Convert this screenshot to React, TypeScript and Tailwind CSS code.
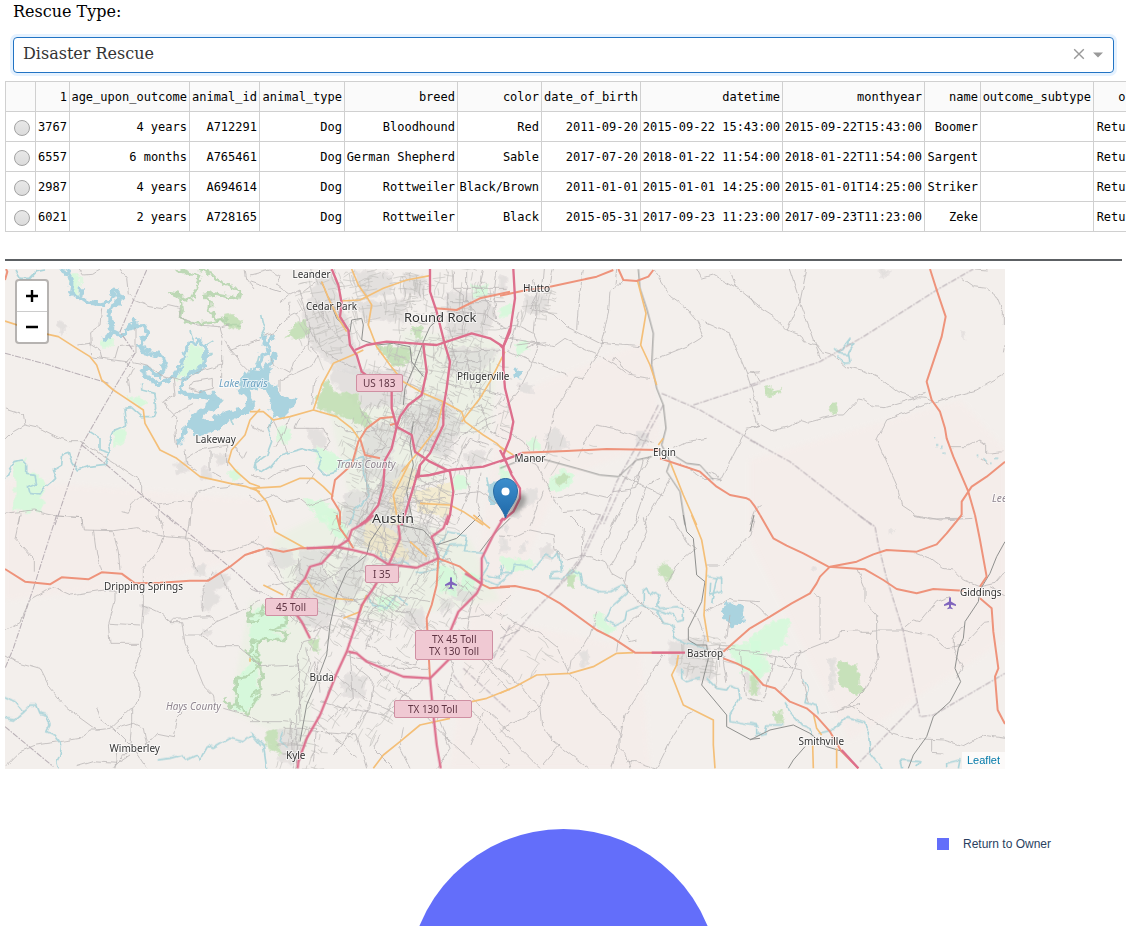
import React from "react";

type Kind =
  | "park" | "wood" | "sand" | "urban" | "water" | "wide" | "river" | "greenline"
  | "minor" | "rail" | "boundary" | "primary" | "trunk" | "motorway";

type Sheet = { x: number; y: number; layers: Partial<Record<Kind, string[]>> };

// Every sheet is drawn at three units per map pixel.
const sheets: Sheet[] = [
  {
    x: 0, y: 265,
    layers: {
      park: [
        "M205 32L225 25L242 45L235 90L215 82Z",
        "M525 343L555 285L575 245L595 238L612 265L608 300L560 330Z",
        "M45 590L75 585L80 620L105 625L132 640L125 740L45 738Z",
        "M345 495L378 490L375 530L340 545Z",
        "M300 230L335 220L340 235L315 250Z",
        "M380 395L420 397L440 418L415 420Z",
        "M680 625L715 615L725 640L700 645Z",
      ],
      urban: ["M170 170L185 165L200 190L185 210Z", "M525 595L560 590L560 620L530 625Z", "M605 610L630 610L635 640L605 645Z", "M640 570L680 568L680 595L650 595Z"],
      wood: ["M675 155L695 150L725 165L720 190L700 192L670 180Z"],
      greenline: [
        "M530 15L600 35L575 105L535 95L510 85L540 90L545 130L540 155L560 170L600 175L660 165L690 180L725 180",
        "M600 15L640 30L660 50L700 70L720 75L715 100L680 92L640 85L610 90L635 115L630 140L650 165L680 160",
      ],
      water: [
        "M575 450L615 425L640 405L600 398L560 395L540 385L600 385L645 385L662 405L655 430L610 445L605 465L630 470L665 445L700 435L735 430L738 400L715 375L720 350L735 325L785 320L785 365L745 370L758 400L758 430L720 455L680 470L650 498L590 512L575 490L555 500Z",
      ],
      wide: [
        "M180 12L205 22L215 50L210 80L235 95L260 112L300 118L325 112L338 90L345 72L358 90L355 115L332 128L328 150L335 180L350 208L375 206L395 182L430 180L442 195L430 222L418 245L430 262L465 270L490 275L497 300L480 330L465 330L445 308L428 315L440 335L470 355L510 345L535 315L550 280L565 240L595 225L620 252L612 300L560 335L540 365L545 385",
        "M325 165L338 200L325 218L310 225M750 330L770 300L780 285M555 485L550 515L535 535",
        "M340 75L330 95M355 95L372 105M245 95L245 70M395 182L405 160M430 250L455 255",
      ],
      river: [
        "M15 640L30 615L45 590L65 585L80 600L80 625L105 628L110 655L85 665L90 685L120 690L130 675L155 655L170 640L160 615L185 600L188 568L205 562L215 590L232 615L260 605L315 598L330 560L325 540L345 495L380 480L375 430L395 428L425 455L460 455L470 430L465 385L425 375L425 355",
        "M45 15L60 40L90 40L110 20L135 15M270 500L300 520L300 555L330 565M780 570L765 590L770 620M770 300L778 270",
        "M580 225L570 195M615 240L640 225M618 270L635 265M480 300L500 305M600 465L570 460M690 455L700 480M655 400L670 410",
      ],
      minor: [
        "M238 12L250 30L275 28L300 12M360 12L380 40L385 85L400 105L450 125L480 130L505 122L540 130L540 155L590 180L660 185L670 220L690 255L780 225",
        "M305 130L300 180L272 200L275 275L305 280L380 290L405 265L405 185M272 235L232 240M345 280L355 245L400 240M305 280L300 255L270 235",
        "M380 290L400 310L385 340L390 380M400 290L440 300L480 330L545 345M550 345L585 325L665 300L665 230",
        "M15 432L70 450L75 480L40 500L15 525M75 480L120 490L170 515L205 530L245 530L320 580L425 650L425 690L395 720L385 745L365 740",
        "M15 745L100 735L170 750L245 755L248 780M60 745L55 780M425 690L475 720L530 710L575 710L570 780M575 710L590 680L620 670L680 665L730 655",
        "M530 545L525 500L530 460L510 440L490 410L525 390L520 340M555 550L560 600L590 620M630 555L630 620L665 640M560 580L600 555L680 540L680 600",
        "M565 370L580 350L640 340L640 370L600 380L565 370M515 460L550 430L580 415M690 255L720 290L750 320M700 540L730 580L740 560",
        "M735 12L740 40L765 75M665 185L690 180M665 300L665 345M475 720L480 780",
      ],
      boundary: ["M440 15L405 95L360 200L405 265L340 375L245 540L165 780M15 265L130 295L325 355M245 540L320 600L425 690L530 780"],
      primary: ["M15 168L130 205L175 215L230 250L270 275L290 300L305 345L340 375L370 395L430 435L435 475L480 555L530 580L600 635L690 655L740 665L780 680M780 432L750 465L735 510L695 555L685 590L710 620L750 655L780 665"],
      trunk: ["M15 45L22 20L18 12"],
    },
  },
  {
    x: 250, y: 265,
    layers: {
      park: ["M195 545L250 565L290 600L255 625L215 620L205 590Z", "M665 60L715 60L715 95L675 95Z", "M160 700L220 710L260 740L270 780L210 770Z", "M610 635L650 635L650 670L610 680Z", "M80 495L110 485L125 515L110 535L80 525Z"],
      wood: ["M200 405L230 345L255 380L320 385L325 420L370 470L345 485L300 465L240 440L205 435Z", "M105 215L140 175L165 165L180 200L155 222Z", "M380 245L480 245L480 290L430 305Z", "M485 190L515 180L515 220L490 215Z"],
      urban: [
        "M165 140L200 40L245 30L270 110L310 220L330 330L260 310L190 250L160 190Z",
        "M460 30L525 35L520 90L465 85Z", "M310 20L420 30L430 85L340 100Z", "M320 110L470 105L465 170L345 160Z",
        "M590 80L700 90L740 150L700 210L590 220Z", "M245 310L470 320L470 420L330 425L245 350Z",
        "M350 480L440 480L430 560L400 640L340 640L335 540Z", "M450 500L560 450L580 560L500 560Z",
        "M290 680L390 670L360 780L270 780Z", "M170 490L220 495L235 550L190 545Z", "M440 440L570 390L640 470L590 580L500 550Z", "M590 250L750 250L700 310L600 330Z",
        "M400 600L480 600L470 780L370 780Z", "M645 565L700 555L705 595L665 600L640 580Z",
      ],
      sand: ["M425 650L480 600L500 640L460 700L450 780L420 780Z", "M490 680L610 650L600 760L500 740Z"],
      water: ["M0 315L30 320L60 320L55 350L80 370L85 390L135 405L130 425L100 455L75 458L60 435L65 405L50 380L15 365L0 368Z", "M0 395L12 410L0 440Z", "M715 680L735 650L740 700L725 720Z"],
      wide: ["M40 325L28 300L35 270L58 262L50 235L72 215M45 325L65 290L75 265M40 215L45 240M0 410L8 430"],
      river: ["M65 460L55 490L65 530L50 570L15 595L12 610L35 620L60 605L90 570L160 550L200 560L215 580L205 610L225 630L260 620L275 590L340 575L345 640L360 690L340 710L310 740L300 780", "M35 150L45 190L30 220M725 700L710 640"],
      minor: [
        "M0 30L60 15L90 30L80 60L120 90L150 75L165 130L110 160L70 200L40 210M90 110L115 90M120 110L115 155",
        "M0 50L60 70L90 80M165 130L180 200L175 240L130 290L120 325L75 300L60 275M180 245L205 270L190 300L125 330L90 345L90 380",
        "M175 180L205 240L250 280L320 310M210 50L250 120L275 170L300 200M200 110L240 190L280 230M160 80L200 50",
        "M70 470L95 520L110 560M120 455L100 510L75 545M150 460L135 490L220 490L240 530L220 555M0 480L40 500L70 470",
        "M0 690L30 710L70 690L105 710L150 700L175 720L240 700M0 630L50 645L85 620L165 600L190 625L170 660",
        "M205 330L190 360L185 420M480 250L490 310L525 330M590 85L600 200L620 290L690 290M600 260L750 255M610 70L770 70M600 110L765 110M590 140L710 150L770 190",
        "M610 20L610 70L640 90L640 200M650 12L650 110L680 150M700 12L690 60L715 120L700 180M740 20L730 100L740 160",
        "M600 310L640 340L690 320L750 330M590 350L620 365L690 370L750 390M620 280L620 370M650 270L670 400M690 260L690 400L740 430M720 280L720 380",
        "M590 390L620 440L690 420L720 500L770 520M580 560L690 470L760 440M610 600L660 520L720 540M580 510L680 500L740 470",
        "M460 395L600 460M470 430L570 550M490 410L440 490M510 450L460 540M550 430L500 540M570 440L510 590M450 520L540 560M360 480L410 540L340 590M370 560L430 540",
        "M330 430L360 485M250 470L290 500L380 500M350 560L350 780M380 660L480 670L590 640M360 720L590 700M510 640L600 690L690 680L760 730M510 710L570 780M640 600L660 680L620 780M690 620L680 710L700 780",
        "M500 610L490 680L520 750M580 620L570 700L530 780M410 600L390 660L320 780",
      ],
      rail: ["M215 50L240 110L260 160L300 200M300 200L305 165L335 160L340 180L335 225L380 240L430 235L480 245L485 290L520 335M580 150L540 185L520 230L490 310L465 370L460 420M490 470L480 540L490 600L470 680L490 780"],
      primary: [
        "M305 12L325 60L350 95L365 120L355 180L380 245L420 300L460 350L520 385L580 410L635 440L645 470L700 510L740 535L765 560",
        "M270 108L330 105L400 70L470 45L540 32M250 295L320 265L340 255M250 295L215 360L190 435M0 440L40 440L70 465L120 455L190 435L260 455L305 490L330 525",
        "M765 260L720 350L690 400L635 470M580 410L560 490L510 555L455 620M0 670L90 665L150 640L190 640L220 665L250 695M15 670L50 710L80 780M215 50L240 110L265 160L290 200",
        "M480 590L430 690L440 750M510 715L600 720L640 740L700 780",
      ],
      trunk: ["M555 130L620 135L690 100L780 80M435 455L390 460L350 490L325 530L305 600L255 645L245 700L270 740L270 780M420 480L440 475M330 520L345 570L390 580"],
      motorway: [
        "M245 12L265 60L275 115L270 155L295 195L300 240L320 270L335 320L375 350L425 375L425 430L440 485L425 550L405 585L400 660L385 720L350 765L330 780",
        "M540 12L540 80L560 140L585 240L600 290L590 370L580 430L580 480L540 565L510 600L480 700L455 780",
        "M315 255L350 240L410 230L490 235L560 240L620 220L665 205L720 220L760 245M780 190L760 245L760 310",
        "M520 240L530 320L515 390L475 420L450 455L440 485L485 510L495 560L540 590L600 620L610 680L600 750L590 780M495 635L540 630L600 615L700 605L760 585M510 600L505 640",
      ],
    },
  },
  {
    x: 500, y: 265,
    layers: {
      park: ["M0 130L35 115L40 145L0 160Z", "M40 240L80 230L90 255L50 275Z", "M150 645L190 610L220 630L210 665L160 680L140 665Z", "M80 530L115 522L120 550L90 555Z", "M0 600L30 620L25 650L0 640Z"],
      wood: ["M165 640L200 625L200 650L170 660Z"],
      urban: ["M75 90L140 90L145 125L110 155L75 140Z", "M55 355L95 360L100 385L60 380Z", "M135 510L170 490L210 545L160 560L140 545Z", "M0 30L20 40L20 80L0 80Z", "M55 680L110 670L115 700L60 740Z", "M410 500L440 500L445 540L410 540Z", "M35 750L60 720L55 760Z"],
      sand: [],
      water: ["M42 318L60 315L62 335L47 338Z", "M0 650L15 645L0 710Z"],
      minor: [
        "M75 60L115 65L110 90L90 130L165 150L200 185L300 235L420 245M250 12L235 120L230 195M110 90L100 200L115 235L160 245L195 220L240 245L285 265L345 300L385 330L450 340",
        "M370 45L330 80L325 145L300 250L250 340L225 340L190 395L165 430L150 500L130 560M0 190L50 180L100 205M0 215L115 235L90 310L60 370L20 420",
        "M460 12L490 60L505 90L560 130L590 165L610 215L570 240L460 285M605 165L640 180L690 205L740 325L780 320M590 12L605 40L640 30L720 75L780 125M690 20L710 70",
        "M340 290L345 280L360 290L370 310L400 330M0 490L40 510L70 530L90 560M250 540L290 480L340 490L460 535M0 420L15 400M50 240L140 230M20 255L130 305L200 330M80 250L110 235",
        "M520 550L560 530L620 520M660 645L740 490L780 480M740 325L780 450M540 590L610 640L660 645L650 630L620 620",
        "M85 590L110 600L160 700L190 740L240 735L300 750M160 700L220 690L260 685L320 700L340 680L410 670L430 580M450 575L410 640L340 780M480 640L440 660L400 780M510 640L430 780M360 630L490 690M130 680L90 780",
        "M350 12L345 60M100 40L110 90M130 12L125 70M160 12L150 60M60 140L30 250",
      ],
      boundary: ["M485 385L600 435L780 540M580 420L780 355M475 420L440 490L400 560L350 650L300 780M490 420L450 495L420 560L370 650L310 780"],
      rail: ["M415 12L420 70L440 130L460 205L455 300L470 370L490 420L498 490L485 540L510 590L500 620L540 680L555 780M0 610L50 590L120 580L230 610L300 630L355 635L410 585L455 575M520 570L560 595L600 600L640 645"],
      primary: ["M412 45L438 145L422 240L450 300L470 360M475 540L490 520M510 590L550 690L590 780M0 545L40 570"],
      trunk: ["M0 92L80 75L150 65L290 35L340 15M355 12L370 45L410 48L445 35L460 15M65 563L200 558L320 552L480 555M480 580L540 600L600 620L650 665L690 690L740 700L750 705"],
      motorway: ["M40 12L45 100L30 200L10 245L10 310L15 370L30 430L40 470L30 520L10 570L35 630L60 670L60 700L40 740L10 765M0 590L65 565M0 240L10 250M0 555L35 625"],
    },
  },
  {
    x: 750, y: 265,
    layers: {
      wood: ["M238 420L260 415L263 445L240 440Z", "M42 370L65 365L60 380L98 370L95 382L65 395L45 388Z"],
      urban: ["M385 15L420 15L403 40Z", "M630 198L640 200L646 220L634 214Z"],
      river: ["M550 520L556 520M555 540L562 540M570 548L578 548M580 568L587 568M680 570L685 572M700 580L710 590M720 592L728 592M735 577L745 577", "M255 250L270 265L285 240L300 220L295 240L315 235L295 265L300 290L285 292L265 275M270 265L295 270"],
      minor: [
        "M0 95L15 120L70 155L110 195L150 210L160 230L200 240L215 260L250 270L290 305L335 315L400 345L445 380L490 395L530 385M170 12L150 110L112 195M118 12L150 110L212 280M0 320L15 320L30 350M0 400L25 480",
        "M0 490L35 480L65 497L120 485L155 465L175 472L260 450L280 450L325 402L340 405L370 422L405 425L500 398L530 400L550 412L680 375L765 325M545 412L410 465L380 525L440 660L455 720L500 750L570 765L670 760",
        "M600 545L650 545L690 525L710 540L710 565L760 560M690 580L715 595M675 12L710 15M635 40L670 65L710 70L740 95L760 140L760 180M765 240L760 265M0 780L15 740L35 720",
      ],
      boundary: ["M0 360L210 290L340 215L560 75L670 12M0 525L120 590L365 780"],
      trunk: ["M540 12L560 75L587 155L575 215L530 350L545 405L570 440L585 490L590 520L610 575L655 680L675 750M765 590L710 635L665 665L635 710L635 750M0 705L15 725L30 750"],
    },
  },
  {
    x: 0, y: 515,
    layers: {
      urban: ["M580 155L615 150L615 180L585 180Z", "M605 225L645 175L690 180L680 215L640 225L660 260L610 290Z", "M425 270L450 285L430 300Z", "M610 345L635 345L635 358L610 358Z"],
      greenline: ["M755 275L740 320L780 320M780 380L755 380L755 410L740 410L780 450M670 548L690 575L715 570L745 595L780 530M780 450L740 485L710 490L710 570"],
      river: ["M15 545L45 560L70 590L40 615L15 610M70 590L90 570L110 570L120 595L140 600L150 630L140 650L165 660L185 690L180 720L170 740L175 760M470 735L510 730L545 720L560 735L590 720L600 735L625 690L640 700L690 670L730 680L755 660L780 690"],
      minor: [
        "M60 0L45 70L100 130L100 170M170 0L245 5L250 45L340 47L410 38L490 65L570 70L620 105L680 110L740 90L780 65M280 45L290 120L305 165M340 50L355 110L360 165M490 65L485 30L470 0M490 65L470 110L430 160L430 270M570 0L560 70L580 140L590 170",
        "M15 345L60 320L90 255L160 215L215 240L310 225L345 225L345 260L325 330L330 385L420 385M330 325L420 330M430 270L425 330L425 400L400 475L420 510L415 560L330 640L290 645L200 580L150 520L120 460L50 440L15 420",
        "M430 270L475 290L510 320L545 320L555 385L590 460L610 510L640 540L645 570M510 320L520 310L630 305L650 320M555 360L600 360L650 320L720 290L780 255M600 360L650 395L715 395L780 450M665 180L715 285M605 290L610 220L640 170",
        "M15 755L60 710L110 690L180 680L240 670L270 645L300 645M290 575L300 610L340 640L390 690M395 580L395 620L390 690M350 640L400 625L430 640L440 690L470 655L520 665L530 610L550 590M230 755L280 740L350 745L390 720M390 700L340 760M400 700L440 760M350 715L345 760M670 580L740 600L780 620",
      ],
      boundary: ["M170 0L100 220L40 400L15 460M500 0L700 165L780 235M15 635L160 755"],
      trunk: ["M15 162L75 200L150 208L185 187L265 193L305 172L365 176L405 205L480 203L570 197L625 197L690 155L735 120L780 105"],
    },
  },
  {
    x: 250, y: 515,
    layers: {
      park: ["M0 300L35 275L60 290L110 290L110 340L60 345L100 370L25 380L20 560L-15 590L-45 590L-40 490L0 450Z", "M220 0L290 30L290 80L250 60Z", "M560 150L620 165L620 240L570 230Z", "M380 250L430 240L450 280L390 290Z", "M640 170L690 180L660 230L630 220Z"],
      wood: ["M180 375L205 365L205 420L185 400Z", "M45 650L80 640L90 720L55 700Z"],
      urban: [
        "M50 110L110 100L140 140L100 160L60 150Z", "M320 20L440 30L440 90L390 110L320 90Z", "M150 100L240 105L210 160L270 220L260 270L160 240L140 180Z", "M420 40L540 20L540 140L430 145Z",
        "M280 120L350 130L330 230L290 270L260 210Z", "M150 240L260 260L230 340L160 330L130 290Z", "M460 280L520 280L525 340L470 335Z", "M300 470L350 490L340 550L280 540L275 500Z", "M80 640L150 640L150 740L90 740Z",
        "M600 200L680 230L650 270L610 250Z", "M570 250L610 255L605 290L575 290Z",
      ],
      sand: ["M350 15L440 50L480 130L410 130L340 90Z"],
      greenline: ["M0 300L30 300L40 270L60 285L110 285L110 325L60 345L115 355L105 375L25 375L20 440L35 470L30 520L0 545M35 440L20 450"],
      river: ["M0 650L40 690L50 760M100 650L90 680L110 700M390 110L410 150L460 140L490 160M570 160L560 100L590 50L650 60L640 110L700 115L715 150L690 190L740 210L780 180M350 240L370 270L410 280L440 240L470 270M500 175L560 165L600 90L650 90M710 180L750 190L760 150"],
      minor: [
        "M0 220L70 250L130 310L180 350L240 330M55 150L90 200L140 240M0 80L50 100L100 190M145 130L150 180L220 200L280 160L400 180M170 150L250 230L360 280M210 140L290 260L350 250M120 270L240 300L370 320M50 215L120 200L210 210",
        "M150 620L145 420L160 380L200 370M30 455L145 450L150 550M60 540L120 530M0 430L30 455M0 620L100 620L150 625M300 410L310 550L230 620M310 450L370 500L360 580L250 720M350 440L490 560L570 650L690 760",
        "M300 580L400 600L520 490M230 460L360 560L450 600M210 560L290 580M180 650L320 660L350 760M200 620L320 730M440 290L480 290L520 360L500 450L430 430L350 390",
        "M290 420L440 460L540 460M350 400L370 340L350 300L420 240L540 260M360 220L430 290L420 370M520 170L480 230L440 290M540 150L600 130L620 200L670 240L650 340L720 380",
        "M580 360L610 470L560 620M600 340L780 490M690 430L780 530M620 310L720 300L780 240M600 490L780 650M560 510L700 620L780 720M660 360L730 440L670 510M570 620L600 700L560 760M700 590L660 690",
        "M100 640L200 640L190 740M120 610L130 760M80 690L170 690M190 440L200 480M200 440L210 530M170 400L180 450L140 600L140 760M460 640L450 700L480 760M390 660L370 700L430 760",
        "M360 50L420 80M370 20L420 120M400 0L410 150M430 70L540 90M460 40L500 130M480 20L540 130M510 0L550 80",
      ],
      rail: ["M400 20L360 80L350 120L290 170L260 240L240 330L230 420L200 500L170 570L150 680M450 30L520 45L560 90L620 70L690 0M780 10L720 70L690 110"],
      boundary: ["M640 460L780 590M610 480L640 520M780 330L730 430"],
      primary: ["M60 0L75 50L130 80L165 100M0 440L0 430M170 195L195 230L250 250L310 255M40 210L100 240M350 240L330 290L280 310M370 760L400 720L450 680L510 630L600 610M665 560L710 550L780 522M670 0L720 40M480 80L530 125"],
      trunk: ["M0 115L50 100L100 110L150 100L250 98M260 0L270 40L295 75L310 100M565 130L560 210L545 270L530 310L540 490M565 130L630 155L690 205L720 220L780 215"],
      motorway: [
        "M370 0L350 20L305 45L295 75L255 100L215 145L180 155L165 190L130 230L120 265L140 300L155 320L180 370M170 100L255 95L310 105L370 120L415 148L500 158L565 130L545 65L580 40L595 0",
        "M445 30L450 70L420 140L370 220L335 270L320 320L290 410L260 475L210 600L170 670L145 740L143 760M295 410L320 415L350 440L460 485L540 490L600 430M600 350L625 290L680 235L695 205L695 130L730 60L760 10M540 490L550 600L560 690L572 760M645 175L695 205",
      ],
    },
  },
  {
    x: 500, y: 515,
    layers: {
      park: ["M0 130L75 130L105 145L90 165L20 170Z", "M280 300L300 290L320 320L350 345L320 355L285 330Z", "M215 160L240 170L245 195L200 190Z", "M680 400L780 370L780 480L730 470Z"],
      wood: ["M475 150L500 142L520 175L510 200L480 180Z", "M200 180L225 180L220 225L200 205Z"],
      urban: ["M0 70L25 75L25 110L0 110Z", "M60 90L80 85L80 110L60 115Z", "M125 100L150 85L160 115L150 135L125 130Z", "M505 380L620 370L630 410L650 480L610 500L550 480L510 440Z", "M240 420L265 405L265 440L245 455Z", "M0 40L20 30L20 50Z", "M730 480L780 470L780 540L740 520Z"],
      water: ["M665 290L685 260L700 268L730 275L725 300L730 320L695 335L675 315Z"],
      river: [
        "M0 150L5 175L35 175L40 150L85 155L100 165L120 140L140 120L160 130L175 110L185 170L150 175L150 190L185 190L220 165L240 175L245 210L300 230L330 230L370 210L385 230L335 275L315 315L345 330L375 315L380 290L425 270L470 285L520 300L530 320L550 315L550 280L530 275L480 280L470 270L480 240L460 230L450 240L440 222L430 230L430 265M470 285L490 320L515 330L525 370L560 385L620 400M545 460L545 490L560 500L600 490M620 490L650 520L680 525L690 510L715 520L720 550L690 600L690 620L780 635",
        "M625 185L665 190L665 230L630 240L632 200M650 190L635 265",
      ],
      minor: [
        "M0 60L50 65L90 45L160 60L165 100L200 135L240 125L270 125L320 145L335 175L370 195L385 230L430 270L490 320M210 0L250 40L245 130L220 165M350 0L300 120M420 0L330 155M430 10L440 50L410 120L405 150L380 170L375 200M510 0L560 80L590 100L530 150L500 210L515 240L590 300L615 370",
        "M0 295L60 330L120 355L170 395L205 470L240 510L290 580L345 630L360 660L350 710L335 760M205 470L210 440L240 410L270 360L290 290M350 410L355 380L380 330L425 290M490 420L440 500L375 600L360 670L360 700L380 720L390 760M135 480L145 500L120 570L70 610L15 635L0 650",
        "M0 460L60 510L120 580L125 630L160 680L265 760M0 640L120 760M180 690L130 750M0 730L25 750L15 760M780 260L700 255L690 250L615 290M670 150L750 60L765 0M620 150L660 150M680 370L690 300M580 590L560 600L520 660L470 760M380 740L410 740L470 760",
        "M380 360L390 380L410 375M0 330L20 350L50 320M0 370L60 345M0 400L20 410L0 430M660 390L670 440L680 500M640 400L780 410M720 410L740 550L780 560",
      ],
      boundary: ["M310 0L250 125L220 170L100 290L0 410M300 0L240 130L160 230"],
      rail: ["M550 0L560 50L580 70L590 180L615 200L605 260L565 340L565 375L590 390L620 390L625 430L605 510L680 600L680 635L750 673L780 670"],
      primary: ["M575 0L605 75L620 160L612 300L625 380M0 535L45 515L110 480L210 475L280 455L350 415L400 413M535 420L530 450L515 480L550 570L640 615L640 690L645 760"],
      trunk: ["M0 215L45 213L115 228L180 265L290 345L340 370L405 413L540 413M670 410L750 340M670 430L710 445L750 465"],
      motorway: ["M455 413L555 413M0 20L10 10"],
    },
  },
  {
    x: 750, y: 515,
    layers: {
      park: ["M0 370L40 340L80 315L120 310L105 390L30 425L0 415Z", "M0 420L50 425L60 470L0 500Z"],
      wood: ["M268 435L285 445L325 455L330 510L345 525L320 545L285 520L265 510Z", "M65 592L95 590L105 620L80 622Z", "M0 480L20 490L25 545L0 540Z"],
      urban: ["M185 160L198 160L198 170L185 170Z", "M418 48L430 48L430 55L418 55Z", "M232 435L255 435L255 525L235 525L240 470Z"],
      river: ["M160 490L175 520L165 560L200 570L205 600M0 625L20 630L20 660L45 655L50 630L100 630M105 565L120 590L155 630L180 640L185 660M205 655L250 645L290 605L340 620L355 650L360 710L400 760M450 735L455 760M450 735L510 740L500 755M590 745L630 735L625 760M590 745L590 760"],
      minor: [
        "M320 160L345 220L345 260L380 300L380 400L385 435L350 520L300 570L260 590L210 595M190 235L210 250L210 375M0 415L50 420L100 430L270 365L270 350L330 348L335 355L365 355L370 345L455 345L500 355L540 360L590 398L640 390L700 325L725 322",
        "M500 115L540 130L580 160L610 165L640 195L690 215M460 340L490 315L510 320L560 260L600 245M490 0L540 12L620 10L640 0M690 215L735 205L765 170M720 215L765 240M640 330L610 370L610 400L635 460L620 490",
        "M300 570L330 590L370 620L405 640L430 655L480 670L580 675L640 692L700 660L765 670M545 675L545 712L580 714M155 465L160 500L165 530L175 560M150 405L135 460L110 510L90 530M75 425L60 480L40 550M0 260L25 275L55 305M60 445L155 465M0 550L40 560M100 430L130 460M260 590L330 565",
      ],
      boundary: ["M325 0L375 35L385 90L410 190L460 350L510 605L550 600L765 475M500 565L330 740"],
      rail: ["M765 80L740 125L720 175L690 225L685 260L645 320L640 370L625 400L615 460L632 500L600 560L550 605L530 665L490 720L475 760M0 675L60 645L130 630L180 655L230 695L280 710M165 695L130 735L115 760M0 50L12 0"],
      primary: ["M190 595L200 640L215 660M188 690L190 760M260 700L260 760"],
      trunk: ["M30 0L70 70L110 92L160 115L235 155L345 163L400 195L440 222L500 235L550 222L640 227M0 340L60 305L125 265L180 235L200 205L210 185L240 155L320 140L370 118L410 105L500 110L560 88L590 55L635 0M675 0L690 75L710 185L690 215M690 250L725 280L730 350L745 460L735 485L743 585L765 627M0 465L40 510L75 520L120 560L170 580L200 605L240 650L275 710L325 760"],
      motorway: ["M275 705L325 760"],
    },
  },
];

const paint: [Kind, React.SVGProps<SVGPathElement>][] = [
  ["urban", { fill: "#dcdad9", opacity: 0.7, stroke: "#e3dfde", strokeWidth: 5 }],
  ["sand", { fill: "#f3e8bf", opacity: 0.6 }],
  ["park", { fill: "#d1fbd9", opacity: 0.8, stroke: "#dcf7de", strokeWidth: 4 }],
  ["wood", { fill: "#c3dfb5", opacity: 0.9, stroke: "#d0e3c5", strokeWidth: 3 }],
  ["greenline", { fill: "none", stroke: "#b3d3ab", strokeWidth: 8, opacity: 0.85 }],
  ["river", { fill: "none", stroke: "#aed5da", strokeWidth: 5 }],
  ["wide", { fill: "none", stroke: "#aad3df", strokeWidth: 12 }],
  ["water", { fill: "#aad3df", stroke: "#aad3df", strokeWidth: 4 }],
  ["minor", { fill: "none", stroke: "#b8b5b4", strokeWidth: 2.3 }],
  ["boundary", { fill: "none", stroke: "#b9b0b6", strokeWidth: 3.2, strokeDasharray: "18 4 5 4" }],
  ["rail", { fill: "none", stroke: "#8f908e", strokeWidth: 3 }],
  ["primary", { fill: "none", stroke: "#f4bf78", strokeWidth: 5 }],
  ["trunk", { fill: "none", stroke: "#ee937b", strokeWidth: 6 }],
  ["motorway", { fill: "none", stroke: "#dd6f8d", strokeWidth: 7 }],
];
const areaKinds: Kind[] = ["urban", "sand", "park", "wood", "greenline", "wide", "water"];

function makeStreets() {
  let seed = 71;
  const rnd = () => {
    seed = (seed * 16807) % 2147483647;
    return seed / 2147483647;
  };
  const areas: [number, number, number, number, number, number][] = [
    [330, 310, 38, 50, -18, 110], [440, 305, 60, 42, 4, 130], [420, 385, 62, 50, 18, 190],
    [395, 455, 55, 60, 22, 220], [390, 525, 62, 45, 20, 240], [340, 590, 58, 45, 25, 160],
    [420, 600, 60, 48, 32, 120], [465, 400, 45, 70, 24, 110], [350, 680, 55, 65, 34, 90],
    [300, 745, 30, 25, 15, 36], [700, 657, 28, 22, 5, 50], [537, 300, 18, 20, 8, 30],
    [490, 640, 60, 50, 38, 35], [560, 440, 30, 22, 20, 12], [380, 290, 45, 25, -8, 60],
  ];
  let d = "";
  for (const [cx, cy, rx, ry, angle, count] of areas) {
    for (let i = 0; i < count; i++) {
      const t = rnd() * Math.PI * 2;
      const r = Math.sqrt(rnd());
      const x = cx + Math.cos(t) * rx * r;
      const y = cy + Math.sin(t) * ry * r;
      const a = ((angle + (rnd() > 0.5 ? 90 : 0) + (rnd() - 0.5) * 24) * Math.PI) / 180;
      const len = 4 + rnd() * 13;
      const bx = x + Math.cos(a) * len * 0.6 + (rnd() - 0.5) * 3;
      const by = y + Math.sin(a) * len * 0.6 + (rnd() - 0.5) * 3;
      d += `M${x.toFixed(1)} ${y.toFixed(1)}L${bx.toFixed(1)} ${by.toFixed(1)}L${(x + Math.cos(a) * len).toFixed(1)} ${(y + Math.sin(a) * len).toFixed(1)}`;
    }
  }
  return d;
}
const streets = makeStreets();

type Label = { t: string; x: number; y: number; w: number; s?: number; c?: string; i?: boolean };
const labels: Label[] = [
  { t: "Leander", x: 292.5, y: 277.5, w: 38 },
  { t: "Cedar Park", x: 306, y: 310, w: 51 },
  { t: "Round Rock", x: 404, y: 322, w: 72.5, s: 13 },
  { t: "Hutto", x: 523, y: 292, w: 27 },
  { t: "Pflugerville", x: 457, y: 380, w: 52.5 },
  { t: "Lakeway", x: 195.5, y: 443, w: 40.5 },
  { t: "Lake Travis", x: 219, y: 386.5, w: 48.5, c: "#6a9fc0", i: true },
  { t: "Travis County", x: 336.5, y: 467.5, w: 59, c: "#8f858f", i: true },
  { t: "Manor", x: 514.5, y: 461.5, w: 31 },
  { t: "Elgin", x: 653, y: 456, w: 23 },
  { t: "Austin", x: 372, y: 522.5, w: 42, s: 13.3 },
  { t: "Dripping Springs", x: 104, y: 590, w: 79 },
  { t: "Buda", x: 309.5, y: 681, w: 24.5 },
  { t: "Hays County", x: 166, y: 710, w: 55, c: "#8f858f", i: true },
  { t: "Kyle", x: 286, y: 759, w: 19.5 },
  { t: "Wimberley", x: 109.5, y: 752, w: 50.5 },
  { t: "Giddings", x: 960, y: 596, w: 41.5 },
  { t: "Bastrop", x: 687, y: 657, w: 36 },
  { t: "Smithville", x: 798.5, y: 745, w: 45.5 },
  { t: "Lee", x: 992, y: 502, w: 15, c: "#8f858f", i: true },
];

const shields: { x: number; y: number; w: number; h: number; rows: [string, number, number, number][] }[] = [
  { x: 356.5, y: 374.5, w: 46, h: 17, rows: [["US 183", 363, 387, 32.5]] },
  { x: 365.5, y: 565.5, w: 33, h: 17, rows: [["I 35", 373, 578, 17.5]] },
  { x: 265.5, y: 598.5, w: 52, h: 17, rows: [["45 Toll", 276, 611, 30]] },
  { x: 415.5, y: 630.5, w: 77, h: 29, rows: [["TX 45 Toll", 432, 642.5, 44.5], ["TX 130 Toll", 429, 654.5, 50]] },
  { x: 394.5, y: 700.5, w: 77, h: 17, rows: [["TX 130 Toll", 408, 713, 49.5]] },
];

function MapDrawing() {
  return (
    <svg className="block h-[500px] w-[1000px]" viewBox="5 269 1000 500">
      <defs>
        <linearGradient id="pin" x1="0" y1="0" x2="0" y2="1">
          <stop offset="0" stopColor="#3c8fcd" />
          <stop offset="1" stopColor="#2068a8" />
        </linearGradient>
        <filter id="soft" x="-50%" y="-50%" width="200%" height="200%">
          <feGaussianBlur stdDeviation="2" />
        </filter>
        <filter id="ragged" filterUnits="userSpaceOnUse" x="5" y="269" width="1000" height="500">
          <feTurbulence type="fractalNoise" baseFrequency="0.16" numOctaves="2" seed="4" result="noise" />
          <feDisplacementMap in="SourceGraphic" in2="noise" scale="9" xChannelSelector="R" yChannelSelector="G" />
        </filter>
        <filter id="wavy" filterUnits="userSpaceOnUse" x="5" y="269" width="1000" height="500">
          <feTurbulence type="fractalNoise" baseFrequency="0.1" numOctaves="2" seed="9" result="noise" />
          <feDisplacementMap in="SourceGraphic" in2="noise" scale="5" xChannelSelector="R" yChannelSelector="G" />
        </filter>
      </defs>
      <rect x="5" y="269" width="1000" height="500" fill="#f3efec" />
      <g filter="url(#soft)" fill="#f6ece9" opacity="0.65">
        <path d="M5 480L260 500L280 545L150 585L5 600ZM500 400L650 340L660 440L560 480L500 620L640 650L650 769L450 769ZM750 460L960 400L1005 450V640L850 740L750 540Z" />
      </g>
      <g fill="#e6f1df" opacity="0.5" filter="url(#soft)">
        <path d="M270 540L350 500L470 540L500 600L380 620L290 600ZM400 330L500 340L490 430L430 440ZM330 415L440 390L440 480L350 500ZM250 600L310 620L310 750L230 710Z" />
      </g>
      {paint.map(([kind, props]) => (
        <React.Fragment key={kind}>
          {kind === "minor" && <path d={streets} fill="none" stroke="#bfbdbb" strokeWidth="0.6" />}
          <g filter={areaKinds.includes(kind) ? "url(#ragged)" : kind === "river" || kind === "minor" ? "url(#wavy)" : undefined}>
            {sheets.map((s) => (
              <g key={`${s.x}-${s.y}`} transform={`translate(${s.x} ${s.y}) scale(.333333)`} strokeLinejoin="round">
                {(s.layers[kind] ?? []).map((d, i) => <path key={i} d={d} {...props} />)}
              </g>
            ))}
          </g>
        </React.Fragment>
      ))}
      {[[451, 583], [950, 603]].map(([x, y]) => (
        <path key={x} transform={`translate(${x} ${y})`} fill="#8065bd" d="M0-6C.8-6 1-5 1-4V-1.5L6 1.5V3L1 1.7V4L2.6 5.2V6.2L0 5.5L-2.6 6.2V5.2L-1 4V1.7L-6 3V1.5L-1-1.5V-4C-1-5-.8-6 0-6Z" />
      ))}
      <g fontFamily="'Noto Sans', sans-serif">
        {labels.map((l) => (
          <text key={l.t} x={l.x} y={l.y} textLength={l.w} lengthAdjust="spacingAndGlyphs" fontSize={l.s ?? 10} fontStyle={l.i ? "italic" : "normal"} fill={l.c ?? "#333"} stroke="#ffffff" strokeOpacity="0.65" strokeWidth="2" strokeLinejoin="round" paintOrder="stroke">{l.t}</text>
        ))}
        {shields.map((s) => (
          <g key={`${s.x}`}>
            <rect x={s.x} y={s.y} width={s.w} height={s.h} rx="1.5" fill="#f0c9d3" stroke="#cf8fa2" />
            {s.rows.map(([t, x, y, w]) => <text key={t} x={x} y={y} textLength={w} lengthAdjust="spacingAndGlyphs" fontSize="10" fill="#603544">{t}</text>)}
          </g>
        ))}
      </g>
      <path d="M506 517L514 499C520 491 529 494 525 503C522 510 514 514 506 517Z" fill="#222" opacity="0.35" filter="url(#soft)" />
      <path d="M505.5 518C503 508.5 493.5 501.5 493.5 491C493.5 484 498.8 478.5 505.5 478.5S517.5 484 517.5 491C517.5 501.5 508 508.5 505.5 518Z" fill="url(#pin)" stroke="#2b6ca3" strokeWidth="1" />
      <circle cx="505.5" cy="491.5" r="4" fill="#fff" />
    </svg>
  );
}

const header = ["1", "age_upon_outcome", "animal_id", "animal_type", "breed", "color", "date_of_birth", "datetime", "monthyear", "name", "outcome_subtype", "outcome_type"];
const rows = [
  ["3767", "4 years", "A712291", "Dog", "Bloodhound", "Red", "2011-09-20", "2015-09-22 15:43:00", "2015-09-22T15:43:00", "Boomer", "", "Return to Owner"],
  ["6557", "6 months", "A765461", "Dog", "German Shepherd", "Sable", "2017-07-20", "2018-01-22 11:54:00", "2018-01-22T11:54:00", "Sargent", "", "Return to Owner"],
  ["2987", "4 years", "A694614", "Dog", "Rottweiler", "Black/Brown", "2011-01-01", "2015-01-01 14:25:00", "2015-01-01T14:25:00", "Striker", "", "Return to Owner"],
  ["6021", "2 years", "A728165", "Dog", "Rottweiler", "Black", "2015-05-31", "2017-09-23 11:23:00", "2017-09-23T11:23:00", "Zeke", "", "Return to Owner"],
];
const rowGrid = "grid h-[30px] w-[1203px] grid-cols-[30px_34px_120px_70px_85px_113px_84px_99px_142px_142px_56px_113px_114px] border-b border-l border-[#d0d0d0]";
const cell = "flex items-center justify-end whitespace-pre border-r border-[#d0d0d0] pt-px pr-[2px]";

export default function App() {
  return (
    <div className="flex h-[926px] w-[1126px] flex-col overflow-hidden bg-white text-black">
      <div className="h-[37px] shrink-0 pl-[13px] font-['DejaVu_Serif',serif] text-[16px] leading-[23px]">Rescue Type:</div>
      <div className="ml-[13px] flex h-[36px] w-[1101px] shrink-0 items-center rounded-[4px] border border-[#2274c4] pl-[9px] font-['DejaVu_Serif',serif] text-[16px] text-[#333] shadow-[0_0_0_3px_rgba(0,126,255,0.1)]">
        <span className="grow pb-[3px]">Disaster Rescue</span>
        <svg className="mr-[7px] mb-[2px] h-[12px] w-[12px]" viewBox="0 0 12 12"><path d="M1.2 1.2L10.8 10.8M10.8 1.2L1.2 10.8" stroke="#999" strokeWidth="1.4" /></svg>
        <svg className="mr-[9px] h-[6px] w-[12px]" viewBox="0 0 12 6"><path d="M1 .5H11L6 5.5Z" fill="#999" /></svg>
      </div>
      <div className="mt-[8px] ml-[5px] h-[151px] shrink-0 overflow-hidden border-t border-[#d0d0d0] font-['DejaVu_Sans_Mono',monospace] text-[12px]">
        <div className={`${rowGrid} bg-[#fafafa]`}>
          <div className={cell} />
          {header.map((h) => <div key={h} className={cell}>{h}</div>)}
        </div>
        {rows.map((r) => (
          <div key={r[0]} className={rowGrid}>
            <div className="flex items-center border-r border-[#d0d0d0] pt-[3px] pl-[8px]">
              <span className="h-[16px] w-[16px] rounded-full border border-[#a2a2a2] bg-linear-to-b from-[#e8e8e8] to-[#dcdcdc]" />
            </div>
            {r.map((v, i) => <div key={i} className={cell}>{v}</div>)}
          </div>
        ))}
      </div>
      <div className="mt-[27px] ml-[5px] h-[2px] w-[1117px] shrink-0 bg-[#5c6063]" />
      <div className="relative mt-[8px] ml-[5px] h-[500px] w-[1000px] shrink-0 overflow-hidden">
        <MapDrawing />
        <div className="absolute top-[10px] left-[10px] flex w-[34px] flex-col overflow-hidden rounded-[4px] border-2 border-black/25 bg-white bg-clip-padding">
          <div className="flex h-[31px] items-center justify-center border-b border-[#ccc]"><svg className="h-[12px] w-[12px]" viewBox="0 0 12 12"><path d="M0 6H12M6 0V12" stroke="#000" strokeWidth="2.4" /></svg></div>
          <div className="flex h-[30px] items-center justify-center"><svg className="h-[12px] w-[12px]" viewBox="0 0 12 12"><path d="M0 6H12" stroke="#000" strokeWidth="2.4" /></svg></div>
        </div>
        <div className="absolute right-0 bottom-0 bg-white/70 px-[5px] font-['Liberation_Sans',sans-serif] text-[11px] leading-[17px] text-[#0078a8]">Leaflet</div>
      </div>
      <div className="flex h-[157px] shrink-0 overflow-hidden">
        <svg className="mt-[60px] ml-[408px] h-[312px] w-[312px] shrink-0" viewBox="0 0 312 312"><circle cx="155.5" cy="155.5" r="155.5" fill="#636efa" /></svg>
        <div className="mt-[65px] ml-[217px] flex h-[19px] items-center font-['Liberation_Sans',sans-serif] text-[12px] text-[#2a3f5f]">
          <span className="mr-[14px] h-[12px] w-[12px] bg-[#636efa]" />Return to Owner
        </div>
      </div>
    </div>
  );
}
